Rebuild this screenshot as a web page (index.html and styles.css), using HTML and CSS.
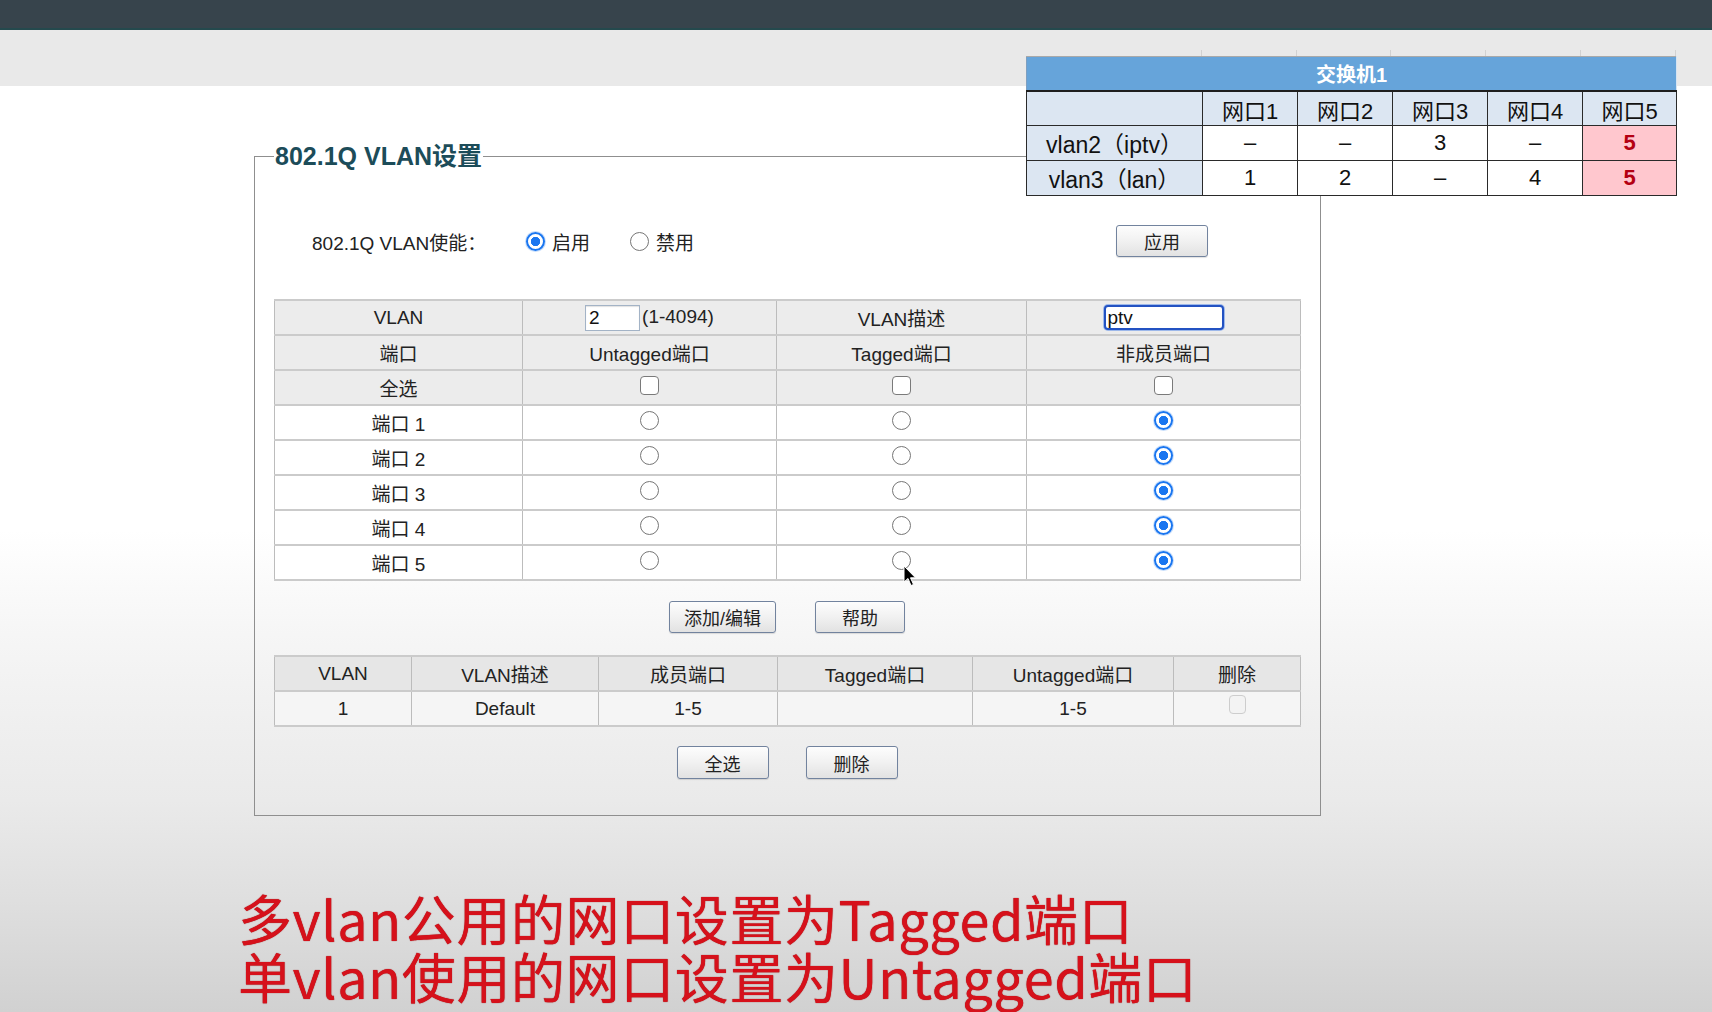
FILE: index.html
```html
<!DOCTYPE html>
<html lang="zh-CN">
<head>
<meta charset="utf-8">
<title>802.1Q VLAN设置</title>
<link rel="stylesheet" href="styles.css">
</head>
<body>
<div class="topbar"></div>
<div class="band"></div>
<main class="page">
  <fieldset class="panel">
    <legend>802.1Q VLAN设置</legend>
    <div class="enable-row">
      <span class="enable-label">802.1Q VLAN使能：</span>
      <label class="opt"><input type="radio" class="rd" name="en" checked>启用</label>
      <label class="opt opt2"><input type="radio" class="rd" name="en">禁用</label>
      <button class="btn btn-apply">应用</button>
    </div>

    <table class="grid cfg">
      <colgroup><col style="width:248px"><col style="width:254px"><col style="width:250px"><col style="width:274px"></colgroup>
      <tr class="hd">
        <td>VLAN</td>
        <td><input class="inp-id" type="text" value="2">(1-4094)</td>
        <td>VLAN描述</td>
        <td><input class="inp-desc" type="text" value="ptv"></td>
      </tr>
      <tr class="hd"><td>端口</td><td>Untagged端口</td><td>Tagged端口</td><td>非成员端口</td></tr>
      <tr class="hd"><td>全选</td><td><input type="checkbox" class="cb"></td><td><input type="checkbox" class="cb"></td><td><input type="checkbox" class="cb"></td></tr>
      <tr><td>端口 1</td><td><input type="radio" class="rd" name="p1"></td><td><input type="radio" class="rd" name="p1"></td><td><input type="radio" class="rd" name="p1" checked></td></tr>
      <tr><td>端口 2</td><td><input type="radio" class="rd" name="p2"></td><td><input type="radio" class="rd" name="p2"></td><td><input type="radio" class="rd" name="p2" checked></td></tr>
      <tr><td>端口 3</td><td><input type="radio" class="rd" name="p3"></td><td><input type="radio" class="rd" name="p3"></td><td><input type="radio" class="rd" name="p3" checked></td></tr>
      <tr><td>端口 4</td><td><input type="radio" class="rd" name="p4"></td><td><input type="radio" class="rd" name="p4"></td><td><input type="radio" class="rd" name="p4" checked></td></tr>
      <tr><td>端口 5</td><td><input type="radio" class="rd" name="p5"></td><td><input type="radio" class="rd" name="p5"></td><td><input type="radio" class="rd" name="p5" checked></td></tr>
    </table>

    <div class="btn-row">
      <button class="btn btn-add">添加/编辑</button>
      <button class="btn btn-help">帮助</button>
    </div>

    <table class="grid list">
      <colgroup><col style="width:137px"><col style="width:187px"><col style="width:179px"><col style="width:195px"><col style="width:201px"><col style="width:127px"></colgroup>
      <tr class="lhd"><td>VLAN</td><td>VLAN描述</td><td>成员端口</td><td>Tagged端口</td><td>Untagged端口</td><td>删除</td></tr>
      <tr class="lrow"><td>1</td><td>Default</td><td>1-5</td><td></td><td>1-5</td><td><input type="checkbox" class="cb dis" disabled></td></tr>
    </table>

    <div class="btn-row btn-row2">
      <button class="btn btn-sm">全选</button>
      <button class="btn btn-sm">删除</button>
    </div>
  </fieldset>

  <div class="caption">
    <div>多vlan公用的网口设置为Tagged端口</div>
    <div>单vlan使用的网口设置为Untagged端口</div>
  </div>
</main>

<div class="xls">
  <div class="xls-grid"><span class="g1"></span><span></span><span></span><span></span><span></span><span></span></div>
  <table class="sw">
    <colgroup><col style="width:176px"><col style="width:95px"><col style="width:95px"><col style="width:95px"><col style="width:95px"><col style="width:94px"></colgroup>
    <tr class="title"><td colspan="6">交换机1</td></tr>
    <tr class="ports"><td></td><td>网口1</td><td>网口2</td><td>网口3</td><td>网口4</td><td>网口5</td></tr>
    <tr><td class="rowhd">vlan2（iptv）</td><td>–</td><td>–</td><td>3</td><td>–</td><td class="bad">5</td></tr>
    <tr><td class="rowhd">vlan3（lan）</td><td>1</td><td>2</td><td>–</td><td>4</td><td class="bad">5</td></tr>
  </table>
</div>

<svg class="cursor" width="14" height="22" viewBox="0 0 14 22" aria-hidden="true">
  <path d="M1 1 L1 17 L5 13.5 L8 20.5 L10.5 19.5 L7.5 12.8 L12.5 12.8 Z" fill="#000" stroke="#fff" stroke-width="1" stroke-linejoin="round"/>
</svg>
</body>
</html>
```

FILE: styles.css
```css
html, body {
  margin: 0;
  height: 1012px;
  overflow: hidden;
}
body {
  position: relative;
  font-family: "Liberation Sans", "Noto Sans CJK SC", sans-serif;
  color: #222;
  background: linear-gradient(180deg, #ffffff 0, #ffffff 530px, #f3f3f3 670px, #eaeaea 800px, #dfdfdf 900px, #d1d1d1 1012px);
}
.topbar {
  height: 28px;
  background: #37444c;
  border-bottom: 2px solid #24494d;
}
.band {
  height: 56px;
  background: #e9e9e9;
}
.page {
  display: block;
}
.panel {
  margin: 55px 0 0 254px;
  width: 1067px;
  box-sizing: border-box;
  padding: 0 20px 36px 19px;
  border: 1px solid #8f8f8f;
  min-width: 0;
}
.panel legend {
  padding: 0 1px;
  font: bold 25px/30px "Liberation Sans", "Noto Sans CJK SC", sans-serif;
  color: #1c4c59;
}
.enable-row {
  display: flex;
  align-items: center;
  height: 40px;
  margin-top: 50px;
  padding-left: 38px;
  font-size: 19px;
}
.enable-label {
  width: 214px;
  white-space: nowrap;
}
.opt {
  display: flex;
  align-items: center;
  gap: 7px;
  white-space: nowrap;
}
.opt2 {
  margin-left: 40px;
}
.btn {
  font: 18px "Liberation Sans", "Noto Sans CJK SC", sans-serif;
  color: #222;
  background: linear-gradient(180deg, #fdfdfd 0%, #f1f1f1 50%, #e2e2e2 100%);
  border: 1px solid #72839e;
  border-radius: 3px;
  height: 32px;
  padding: 0;
  box-shadow: 0 1px 1px rgba(0, 0, 0, 0.12);
}
.btn-apply {
  margin-left: auto;
  margin-right: 92px;
  width: 92px;
}

.grid {
  border-collapse: collapse;
  table-layout: fixed;
  width: 1026px;
  font-size: 19px;
}
.grid td {
  border-left: 1px solid #bcbcbc;
  border-right: 1px solid #bcbcbc;
  border-top: 2px solid #cbcbcb;
  border-bottom: 2px solid #cbcbcb;
  text-align: center;
  vertical-align: middle;
  padding: 0;
  white-space: nowrap;
}
.cfg {
  margin-top: 38px;
}
.cfg tr {
  height: 35px;
}
.cfg tr td {
  background: #ffffff;
}
.cfg tr.hd td {
  background: #ececec;
}
.inp-id {
  width: 55px;
  height: 26px;
  box-sizing: border-box;
  border: 1px solid #a3b3c6;
  box-shadow: inset 0 1px 1px rgba(0, 0, 0, 0.12);
  font: 19px "Liberation Sans", sans-serif;
  padding: 0 3px;
  margin: 0 2px 0 0;
  vertical-align: middle;
  background: #fff;
  color: #111;
}
.inp-desc {
  width: 120px;
  height: 25px;
  box-sizing: border-box;
  border: 2px solid #2352c2;
  border-radius: 4px;
  box-shadow: 0 0 0 1px #9db8ea;
  font: 19px "Liberation Sans", sans-serif;
  padding: 0 2px;
  margin: 0;
  vertical-align: middle;
  background: #fff;
  color: #111;
  outline: none;
}
.rd {
  appearance: none;
  -webkit-appearance: none;
  width: 19px;
  height: 19px;
  box-sizing: border-box;
  border: 1px solid #767676;
  border-radius: 50%;
  background: #fff;
  margin: 0 0 4px;
  vertical-align: middle;
}
.rd:checked {
  border: 2px solid #1a76f0;
  background: radial-gradient(circle, #1a76f0 0 4.4px, #ffffff 5px);
  box-shadow: 0 0 0 1px rgba(26, 118, 240, 0.25);
}
.opt .rd {
  margin: 0;
}
.cb {
  appearance: none;
  -webkit-appearance: none;
  width: 19px;
  height: 19px;
  box-sizing: border-box;
  border: 1px solid #7a7a7a;
  border-radius: 4px;
  background: #fff;
  margin: 0 0 4px;
  vertical-align: middle;
}
.cb.dis {
  width: 17px;
  height: 19px;
  border-color: #cdcdcd;
  background: #f3f3f3;
  margin-bottom: 8px;
}

.btn-row {
  display: flex;
  justify-content: center;
  gap: 39px;
  margin-top: 20px;
}
.btn-add {
  width: 107px;
}
.btn-help {
  width: 90px;
}
.list {
  margin-top: 22px;
}
.list tr {
  height: 35px;
}
.list tr.lhd td {
  background: #e6e6e6;
}
.list tr.lrow td {
  background: #f5f5f5;
}
.btn-row2 {
  gap: 37px;
  margin-top: 19px;
}
.btn-sm {
  width: 92px;
  height: 33px;
}

.caption {
  margin: 73px 0 0 238px;
  font: 54px/58px "Noto Sans CJK SC", sans-serif;
  color: #d6111b;
  letter-spacing: 0.6px;
  white-space: nowrap;
  text-shadow: 0 0 1px #900000;
}

.xls {
  position: absolute;
  left: 1026px;
  top: 50px;
  width: 650px;
}
.xls-grid {
  display: flex;
  height: 6px;
}
.xls-grid span {
  width: 95px;
  border-right: 1px solid #d2d2d2;
  box-sizing: border-box;
}
.xls-grid span.g1 {
  width: 176px;
}
.sw {
  border-collapse: collapse;
  table-layout: fixed;
  width: 650px;
  font-family: "Liberation Sans", "Noto Sans CJK SC", sans-serif;
  color: #111;
  background: #fff;
}
.sw td {
  border: 1px solid #2a2a2a;
  height: 33px;
  padding: 0;
  text-align: center;
  vertical-align: middle;
  font-size: 22px;
  white-space: nowrap;
}
.sw tr.title td {
  height: 33px;
  background: #66a4da;
  color: #fff;
  font-weight: bold;
  font-size: 20px;
  border-top: 1px solid #a9a9a9;
  border-left: 1px solid #7e9fc0;
  border-right: 1px solid #d6e4f2;
  border-bottom: 2px solid #1e1e1e;
}
.sw tr.ports td {
  background: #dce6f2;
  font-size: 22px;
}
.sw td.rowhd {
  background: #dce6f2;
  font-size: 23px;
}
.sw td.bad {
  background: #ffc7ce;
  color: #b40012;
  font-weight: bold;
}
.cursor {
  position: absolute;
  left: 903px;
  top: 565px;
}
```
